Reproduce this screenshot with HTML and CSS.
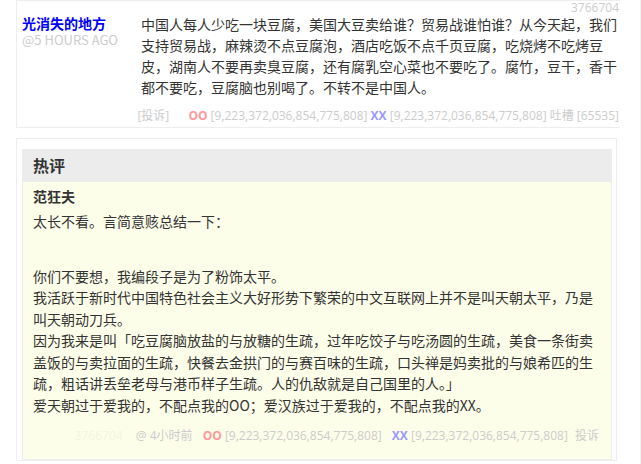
FILE: index.html
```html
<!DOCTYPE html>
<html lang="zh-CN">
<head>
  <meta charset="UTF-8" />
  <meta name="viewport" content="width=device-width, initial-scale=1" />
  <title>光消失的地方</title>
  <link rel="stylesheet" href="styles.css">
</head>
<body>
  <div class="page">
    <div class="comment">
      <span class="comment-id">3766704</span>
      <div class="comment-row">
        <div class="author">
          <strong class="author-name">光消失的地方</strong>
          <small class="author-time">@5 HOURS AGO</small>
        </div>
        <div class="text">
          中国人每人少吃一块豆腐，美国大豆卖给谁？贸易战谁怕谁？从今天起，我们支持贸易战，麻辣烫不点豆腐泡，酒店吃饭不点千页豆腐，吃烧烤不吃烤豆皮，湖南人不要再卖臭豆腐，还有腐乳空心菜也不要吃了。腐竹，豆干，香干都不要吃，豆腐脑也别喝了。不转不是中国人。
        </div>
      </div>
      <div class="vote">
        <span class="report">[投诉]</span>
        <span class="oo">OO</span> <span class="num">[9,223,372,036,854,775,808]</span>
        <span class="xx">XX</span> <span class="num">[9,223,372,036,854,775,808]</span>
        <span class="num">吐槽 [65535]</span>
      </div>
    </div>

    <div class="hot">
      <h3 class="hot-title">热评</h3>
      <div class="hot-body">
        <div class="hot-author">范狂夫</div>
        <p class="hot-intro">太长不看。言简意赅总结一下：</p>
        <p class="hot-text">你们不要想，我编段子是为了粉饰太平。<br>
        我活跃于新时代中国特色社会主义大好形势下繁荣的中文互联网上并不是叫天朝太平，乃是叫天朝动刀兵。<br>
        因为我来是叫「吃豆腐脑放盐的与放糖的生疏，过年吃饺子与吃汤圆的生疏，美食一条街卖盖饭的与卖拉面的生疏，快餐去金拱门的与赛百味的生疏，口头禅是妈卖批的与娘希匹的生疏，粗话讲丢垒老母与港币样子生疏。人的仇敌就是自己国里的人。」<br>
        爱天朝过于爱我的，不配点我的OO；爱汉族过于爱我的，不配点我的XX。</p>
        <div class="hot-vote">
          <span class="ghost">3766704</span>
          <span class="num">@ 4小时前</span>
          <span class="oo">OO</span> <span class="num">[9,223,372,036,854,775,808]</span>
          <span class="xx">XX</span> <span class="num">[9,223,372,036,854,775,808]</span>
          <span class="report-link">投诉</span>
        </div>
      </div>
    </div>
  </div>
</body>
</html>
```

FILE: styles.css
```css
/* Global */
body {
  margin: 0;
  background-color: #fff;
  color: #333;
  font-family: "Noto Sans CJK SC", "Liberation Sans", sans-serif;
  font-size: 14px;
}
.page {
  box-sizing: border-box;
  width: 641px;
  height: 464px;
  padding-left: 16px;
  border-right: 1px solid #f2f2f2;
  overflow: hidden;
}

/* Comment */
.comment {
  position: relative;
  box-sizing: border-box;
  width: 604px;
  border: 1px solid #eee;
  border-right: none;
  padding: 0 1px 2px 5px;
}
.comment-id {
  position: absolute;
  top: 1px;
  right: 1px;
  font-family: "Open Sans", "Noto Sans CJK SC", sans-serif;
  font-size: 12px;
  line-height: 12px;
  color: #ccc;
}
.comment-row {
  display: flex;
  padding-top: 13px;
}
.author {
  width: 119px;
  flex-shrink: 0;
}
.author-name {
  display: block;
  color: #00f;
  font-size: 14px;
  line-height: 19px;
}
.author-time {
  display: block;
  color: #ccc;
  font-size: 13px;
  line-height: 14px;
}
.text {
  width: 478px;
  line-height: 21px;
}
.vote {
  margin-top: 9px;
  text-align: right;
  font-family: "Open Sans", "Noto Sans CJK SC", sans-serif;
  font-size: 12px;
  line-height: 18px;
  color: #ccc;
}
.report {
  margin-right: 16px;
}
.oo {
  color: #f99;
  font-weight: bold;
}
.xx {
  color: #99f;
  font-weight: bold;
}

/* Hot comment box */
.hot {
  box-sizing: border-box;
  width: 601px;
  margin-top: 10px;
  border: 1px solid #eee;
  padding: 10px 4px 0 5px;
}
.hot-title {
  margin: 0;
  padding: 0 11px;
  height: 33px;
  line-height: 33px;
  font-size: 16px;
  background-color: #ececec;
  color: #333;
}
.hot-body {
  background-color: #fdfee9;
  border: 1px solid #eee;
  border-top: none;
  padding: 3px 10px 14px;
}
.hot-author {
  font-weight: bold;
  line-height: 22px;
}
.hot-body p {
  margin: 0;
  line-height: 21.5px;
}
.hot-intro {
  padding-top: 4px;
}
.hot-text {
  padding-top: 33px;
}
.hot-vote {
  margin-top: 11px;
  padding-right: 2px;
  text-align: right;
  font-family: "Open Sans", "Noto Sans CJK SC", sans-serif;
  font-size: 12px;
  line-height: 18px;
  color: #ccc;
}
.hot-vote .oo,
.hot-vote .xx {
  margin-left: 7px;
}
.report-link {
  margin-left: 4px;
}
.ghost {
  color: #f4f4e2;
  margin-right: 10px;
}
```
